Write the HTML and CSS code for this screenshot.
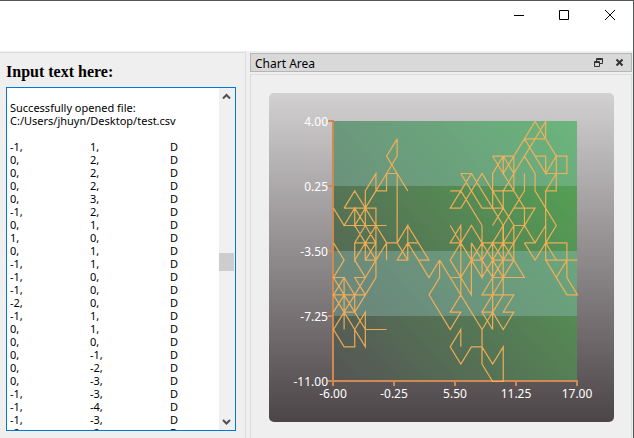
FILE: index.html
```html
<!DOCTYPE html>
<html lang="en">
<head>
<meta charset="utf-8">
<title>Chart Area</title>
<link rel="stylesheet" href="styles.css">
</head>
<body>
<div class="window">
  <header class="titlebar">
    <button class="caption" aria-label="Minimize"><svg width="12" height="12"><path d="M2 5.500h10"/></svg></button>
    <button class="caption" aria-label="Maximize"><svg width="12" height="12"><path d="M1.500 .500h9v9h-9z"/></svg></button>
    <button class="caption" aria-label="Close"><svg width="12" height="12"><path d="M1 0l10 10M11 0L1 10"/></svg></button>
  </header>
  <main class="workspace">
    <section class="input-panel">
      <label class="heading" for="input">Input text here:</label>
      <div class="editor">
        <textarea id="input" class="text" spellcheck="false" wrap="off">

Successfully opened file:
C:/Users/jhuyn/Desktop/test.csv

-1,	1,	D
0,	2,	D
0,	2,	D
0,	2,	D
0,	3,	D
-1,	2,	D
0,	1,	D
1,	0,	D
0,	1,	D
-1,	1,	D
-1,	0,	D
-1,	0,	D
-2,	0,	D
-1,	1,	D
0,	1,	D
0,	0,	D
0,	-1,	D
0,	-2,	D
0,	-3,	D
-1,	-3,	D
-1,	-4,	D
-1,	-3,	D
-2,	-2,	D</textarea>
        <div class="scrollbar">
          <button class="arrow" aria-label="Scroll up"><svg width="9" height="8"><path d="M1 5.500l3.500-3.500L8 5.500"/></svg></button>
          <div class="track"><div class="thumb"></div></div>
          <button class="arrow" aria-label="Scroll down"><svg width="9" height="8"><path d="M1 2l3.500 3.500L8 2"/></svg></button>
        </div>
      </div>
    </section>
    <section class="dock">
      <div class="dock-title">
        <h2 class="dock-name">Chart Area</h2>
        <button class="tool" aria-label="Float"><svg width="9" height="10"><path d="M2.500 4V.500h6v5H6M2 1.500h7M.500 3.500h5v5h-5zM0 4.500h6"/></svg></button>
        <button class="tool" aria-label="Close dock"><svg width="9" height="10"><path class="cross" d="M1.500 1.500l6 6M7.500 1.500l-6 6"/></svg></button>
      </div>
      <div class="dock-body">
        <div class="card">
          <svg class="chart" viewBox="0 0 345 329" role="img" aria-label="Line chart">
            <defs>
              <linearGradient id="plot" x1="0" y1="1" x2="1" y2="0">
                <stop offset="0" stop-color="#555555"/>
                <stop offset="1" stop-color="#55aa55"/>
              </linearGradient>
            </defs>
            <rect x="64" y="28" width="244" height="260" fill="url(#plot)"/>
            <path class="band" d="M64 28h244v65H64zM64 158h244v65H64z"/>
            <path class="axis" d="M64 27v262M63 288h246M59 28h5M59 93h5M59 158h5M59 223h5M59 288h5M64 288v5M125 288v5M186 288v5M247 288v5M308 288v5"/>
            <!-- One unit per data step: x from -6, y down from 4 -->
            <g transform="translate(64.500 28.500) scale(10.609 17.333)">
              <path class="series" d="M6 1L5 2L6 3M6 1V2L5 3M5 3H6L7 4M6 3V7M5 3V4H4L5 3M4 4L3 5M4 4V3L3 4V5M1 5L2 4L3 5M1 5H4V6M0 5L1 6L2 5V6L3 5V6M2 5L3 6M3 5L4 6M1 6H5M2 6L3 7M3 6L2 7M3 6L4 7M4 6L3 7M4 6V8L3 7V8H4M4 6L5 7H6M5 7V8M2 7H4L3 8M2 7V8L3 7M5 7L4 8L3 9M2 8L3 9H2L3 10M4 8V9L3 10L2 11M3 9L2 10M0 7L1 8L0 9H1L0 10H3M6 7L7 6V8H6L7 7H8L9 8H8L7 7M7 6L8 7M6 7L7 8M8 8L9 9L10 8"/>
              <path class="series" d="M0 9L1 10M1 9V12M1 9L2 10V11H1L0 12L1 13H2V12M0 10L1 11L2 10M1 10L0 11M1 10L2 11L3 12H5M1 11L2 12L3 13V11L2 12"/>
              <path class="series" d="M12 3H13L12 4H11M12 3L13 4L12 5H11L12 4M13 3L14 4L15 5M12 4L13 5L14 6M13 4L14 3L15 4M14 5L13 4M14 5H15V3L16 2M15 4H17M15 4L16 5H15L16 6M16 4V5L17 6M15 2H17V4L16 3L15 2M16 2V3L17 2M16 2L17 3L16 4M17 4L18 5H19L18 6V5M17 5H18M17 3L18 2L19 1H18L17 2M18 1L19 0L20 1V0L19 1L18 2L19 3V4L20 5L21 6L20 7M18 1L19 2H20V3L19 2M19 1H20L21 2H22V3H20L21 2V4H20L21 3M20 4V8M18 3V4L17 5L16 6M16 5L17 6V8M16 5L15 6M18 6H17L16 7V6M17 5L16 6"/>
              <path class="series" d="M18 6L17 7M18 6L19 7L20 6M18 7H19M18 7L19 8L20 7H22V9L23 10H22L20 8H23M20 7L21 8M22 8L21 9M11 6L12 7H11L12 6V10M12 7L13 6L14 7V6V9L13 8L12 7M12 7L11 8L12 9H11M13 7V10L12 9L13 8H14L13 7M14 7H17L16 8L15 7V12M15 7L14 8L15 9L16 8M14 7L13 8M14 7L15 8L14 9M16 7L15 8H17L16 7M16 6V10M15 8L16 9L17 8L18 9H15M16 6L15 7M16 9L14 11M16 10L14 12M15 9L14 10H17L16 11H17L16 12L15 11H14L15 12M10 8L11 9L12 10L14 12M10 8V9L9 10L11 12L12 11H11L12 10M14 12V14L15 15H16V13L15 14L14 13H13L12 14L11 13L12 12V13"/>
            </g>
            <g class="labels end">
              <text x="59" y="33">4.00</text>
              <text x="59" y="98">0.25</text>
              <text x="59" y="163">-3.50</text>
              <text x="59" y="228">-7.25</text>
              <text x="59" y="293">-11.00</text>
            </g>
            <g class="labels mid">
              <text x="64" y="305">-6.00</text>
              <text x="125" y="305">-0.25</text>
              <text x="186" y="305">5.50</text>
              <text x="247" y="305">11.25</text>
              <text x="308" y="305">17.00</text>
            </g>
          </svg>
        </div>
      </div>
    </section>
  </main>
</div>
</body>
</html>
```
FILE: styles.css
```css
* { box-sizing: border-box; }
body {
  margin: 0;
  font-family: "Noto Sans", sans-serif;
  font-size: 11px;
  color: #000;
}
button { padding: 0; border: 0; background: none; display: grid; place-items: center; }
svg { display: block; fill: none; }
.window {
  display: flex;
  flex-direction: column;
  height: 100vh;
  overflow: hidden;
  border: solid #555658;
  border-width: 1px 1px 0 0;
  background: #efefef;
}
.titlebar {
  flex: none;
  display: flex;
  justify-content: flex-end;
  height: 50px;
  background: #fff;
}
.caption { width: 46px; height: 29px; }
.caption svg { stroke: #000; }
.workspace { flex: 1; min-height: 0; display: flex; gap: 4px; padding-top: 1px; }
.input-panel {
  flex: 0 0 246px;
  display: flex;
  flex-direction: column;
  padding: 9px 9px 7px 6px;
  border: solid #dcdcdc;
  border-width: 1px 1px 0 0;
}
.heading {
  flex: none;
  height: 25px;
  font: bold 16px/20px "Liberation Serif", serif;
}
.editor { flex: 1; min-height: 0; display: flex; border: 1px solid #0078d7; background: #fff; }
.text {
  flex: 1;
  min-width: 0;
  padding: 0 3px;
  border: 0;
  outline: 0;
  resize: none;
  overflow: hidden;
  background: #fff;
  color: #000;
  font: 11px/13px "Noto Sans", sans-serif;
  white-space: pre;
  tab-size: 80px;
}
.scrollbar { width: 16px; display: flex; flex-direction: column; background: #f0f0f0; }
.arrow { width: 15px; height: 17px; }
.arrow svg { stroke: #505050; stroke-width: 2; }
.track { flex: 1; display: flex; flex-direction: column; }
.track::before { content: ""; flex: 148; }
.track::after { content: ""; flex: 142; }
.thumb { width: 15px; height: 18px; background: #cdcdcd; }
.dock { flex: 1; min-width: 0; display: flex; flex-direction: column; gap: 2px; padding: 1px 1px 0 0; }
.dock-title {
  flex: none;
  display: flex;
  align-items: center;
  gap: 12px;
  height: 19px;
  padding: 0 7px 0 4px;
  border: 1px solid #b5b5b5;
  background: #d9d9d9;
}
.dock-name { flex: 1; margin: 0; padding-top: 2px; font-size: 12px; line-height: 16px; font-weight: normal; }
.tool svg { stroke: #333; }
.tool .cross { stroke-width: 2; }
.dock-body { flex: 1; min-height: 0; padding: 18px 17px 16px 18px; border: solid #dcdcdc; border-width: 1px 1px 0 1px; }
.card { height: 100%; border-radius: 5px; background: linear-gradient(#d2d0d1, #4c4547); }
.chart { width: 100%; height: 100%; }
.band { fill: #99cccc; fill-opacity: 0.333; }
.axis { stroke: #d18952; stroke-width: 2; }
.series { stroke: #fdb157; stroke-opacity: 0.9; stroke-width: 1.2; vector-effect: non-scaling-stroke; }
.labels { fill: #fff; font-size: 12px; }
.end { text-anchor: end; }
.mid { text-anchor: middle; }
```
